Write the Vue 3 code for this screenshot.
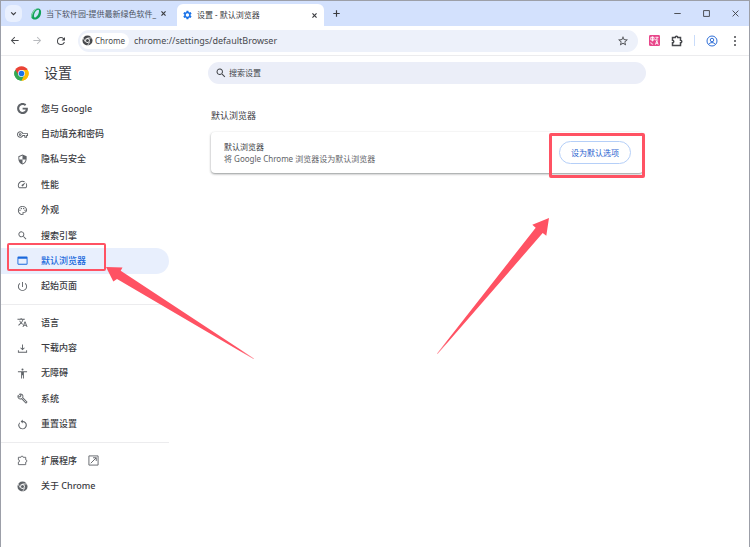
<template>
  <div class="window">
    <header class="tabstrip">
      <button class="tab-search" type="button" aria-label="搜索标签页">
        <svg viewBox="0 0 24 24" class="icon-sm"><path class="line bold" d="M4 8l8 8 8-8" /></svg>
      </button>
      <div class="tab">
        <svg class="icon-lg" viewBox="0 0 24 24">
          <path fill="#12a25a" fill-rule="evenodd" d="M15 1c6 0 8 4 7 10-1 7-6 12-12 12-7 0-9-5-7-11C5 6 9 1 15 1zm0 3c-4 1-7 7-7 12 0 3 2 4 4 2 4-3 6-8 6-12 0-2-1-3-3-2z" />
          <path fill="#8ed8b1" d="M15 1C9 1 5 6 3 12c-1 3-1 6 1 8 0-8 4-15 11-19z" />
        </svg>
        <span class="tab-title muted">当下软件园-提供最新绿色软件_</span>
        <button class="close" type="button" aria-label="关闭">
          <svg viewBox="0 0 24 24" class="icon-sm"><path class="line bold" d="M5 5l14 14M19 5L5 19" /></svg>
        </button>
      </div>
      <div class="tab active">
        <svg class="icon-lg" viewBox="0 0 24 24"><path fill="#1a73e8" fill-rule="evenodd" :d="paths.gear" /></svg>
        <span class="tab-title">设置 - 默认浏览器</span>
        <button class="close" type="button" aria-label="关闭">
          <svg viewBox="0 0 24 24" class="icon-sm"><path class="line bold" d="M5 5l14 14M19 5L5 19" /></svg>
        </button>
      </div>
      <button class="new-tab" type="button" aria-label="新标签页">
        <svg viewBox="0 0 24 24" class="icon-sm"><path class="line bold" d="M12 1v22M1 12h22" /></svg>
      </button>
      <div class="controls">
        <button type="button" aria-label="最小化"><svg viewBox="0 0 24 24" class="icon-sm"><path class="line strong" d="M1 12h22" /></svg></button>
        <button type="button" aria-label="最大化"><svg viewBox="0 0 24 24" class="icon-sm"><path class="line strong" d="M2 2h20v20H2z" /></svg></button>
        <button type="button" aria-label="关闭窗口"><svg viewBox="0 0 24 24" class="icon-sm"><path class="line strong" d="M2 2l20 20M22 2L2 22" /></svg></button>
      </div>
    </header>

    <div class="toolbar">
      <div class="nav-buttons">
        <button type="button" aria-label="后退"><svg viewBox="0 0 24 24" class="icon-md"><path :d="paths.back" /></svg></button>
        <button type="button" aria-label="前进" disabled><svg viewBox="0 0 24 24" class="icon-md"><path :d="paths.forward" /></svg></button>
        <button type="button" aria-label="重新加载"><svg viewBox="0 0 24 24" class="icon-lg"><path :d="paths.reload" /></svg></button>
      </div>
      <div class="address">
        <span class="chip">
          <svg viewBox="0 0 24 24" class="icon-md"><path fill-rule="evenodd" :d="paths.chrome" /><path class="gap" :d="paths.chromeGaps" /></svg>
          Chrome
        </span>
        <input v-model="url" class="url" type="text" aria-label="网址" />
        <button type="button" aria-label="添加书签"><svg viewBox="0 0 24 24" class="icon-lg"><path :d="paths.star" /></svg></button>
      </div>
      <div class="actions">
        <button type="button" aria-label="翻译扩展">
          <svg viewBox="0 0 24 24" class="icon-md">
            <rect width="24" height="24" rx="3" fill="#e8468a" />
            <path class="white" d="M4 5h7v6H4zM7.500 3v11M14 5h6l-6 6h6M14 21l3-8 3 8M15 18h4M4 16c0 3 2 4 5 4" />
          </svg>
        </button>
        <button type="button" aria-label="扩展程序"><svg viewBox="0 0 24 24" class="icon-lg"><path class="line strong" :d="paths.puzzle" /></svg></button>
        <span class="separator"></span>
        <button type="button" aria-label="个人资料">
          <svg viewBox="0 0 24 24" class="icon-lg"><g class="blue"><circle cx="12" cy="12" r="10" /><circle cx="12" cy="10" r="3.500" /><path d="M5 19c3-5 11-5 14 0" /></g></svg>
        </button>
        <button type="button" aria-label="更多"><svg viewBox="0 0 24 24" class="icon-lg"><circle cx="12" cy="4" r="2" /><circle cx="12" cy="12" r="2" /><circle cx="12" cy="20" r="2" /></svg></button>
      </div>
    </div>

    <div class="page">
      <aside class="sidebar">
        <div class="brand">
          <svg class="logo" viewBox="0 0 48 48">
            <path fill="#ea4335" d="M24 24L4.080 12.500a23 23 0 0 1 39.840 0z" />
            <path fill="#fbbc04" d="M24 24l19.920-11.500A23 23 0 0 1 24 47z" />
            <path fill="#34a853" d="M24 24v23A23 23 0 0 1 4.080 12.500z" />
            <path fill="#ea4335" d="M4.080 12.500L14.500 30 24 13h19.900z" />
            <path fill="#34a853" d="M4.080 12.500L14.500 29.500l19 0L24 47A23 23 0 0 1 4.080 12.500z" />
            <path fill="#fbbc04" d="M24 13h19.900A23 23 0 0 1 24 47l10-17.500z" />
            <circle cx="24" cy="24" r="11" fill="#fff" />
            <circle cx="24" cy="24" r="9" fill="#1a73e8" />
          </svg>
          <h1>设置</h1>
        </div>
        <nav>
          <ul v-for="(group, i) in groups" :key="i" :class="['group', 'group-' + group.length]">
            <li v-for="item in group" :key="item.label">
              <a href="#" :class="{ selected: item.label === current }" @click.prevent="current = item.label">
                <svg viewBox="0 0 24 24" class="icon-md">
                  <path :class="{ line: item.stroke }" fill-rule="evenodd" :d="paths[item.icon]" />
                  <path v-if="item.icon === 'chrome'" class="gap" :d="paths.chromeGaps" />
                </svg>
                <span>{{ item.label }}</span>
                <svg v-if="item.external" viewBox="0 0 24 24" class="icon-md"><path class="line" :d="paths.external" /></svg>
              </a>
              <template v-if="item.marked">
                <span class="mark nav-mark"></span>
                <svg class="arrow nav-arrow" viewBox="0 0 148 92">
                  <defs>
                    <linearGradient id="fadeA" x1="0" y1="0" x2="1" y2="0">
                      <stop offset="0.900" stop-color="#ff5263" />
                      <stop offset="1" stop-color="#ff5263" stop-opacity="0.600" />
                    </linearGradient>
                  </defs>
                  <path fill="url(#fadeA)" d="M0 0l16.500.5-1.800 3.300L148 91.500l-.6.5L11 12 7.300 14.500z" />
                </svg>
              </template>
            </li>
          </ul>
        </nav>
      </aside>

      <main>
        <label class="search">
          <svg viewBox="0 0 24 24" class="icon-lg"><path :d="paths.search" /></svg>
          <input v-model="query" type="text" placeholder="搜索设置" aria-label="搜索设置" />
        </label>
        <section>
          <h2>默认浏览器</h2>
          <div class="card">
            <div class="card-text">
              <strong>默认浏览器</strong>
              <span>将 Google Chrome 浏览器设为默认浏览器</span>
            </div>
            <div class="card-action">
              <button type="button">设为默认选项</button>
              <span class="mark button-mark"></span>
              <svg class="arrow button-arrow" viewBox="0 0 112 136">
                <defs>
                  <linearGradient id="fadeB" x1="0" y1="1" x2="0" y2="0">
                    <stop offset="0" stop-color="#ff5263" stop-opacity="0.600" />
                    <stop offset="0.100" stop-color="#ff5263" />
                  </linearGradient>
                </defs>
                <path fill="url(#fadeB)" d="M112 0L95.300 6.700l3.400 3L0 135.500l.6.5L105.700 15l3.600 2.700z" />
              </svg>
            </div>
          </div>
        </section>
      </main>
    </div>
  </div>
</template>

<script setup>
import { ref } from 'vue';

const url = ref('chrome://settings/defaultBrowser');
const query = ref('');
const current = ref('默认浏览器');

const groups = [
  [
    { label: '您与 Google', icon: 'google' },
    { label: '自动填充和密码', icon: 'key' },
    { label: '隐私与安全', icon: 'shield' },
    { label: '性能', icon: 'speed' },
    { label: '外观', icon: 'palette' },
    { label: '搜索引擎', icon: 'search' },
    { label: '默认浏览器', icon: 'browser', marked: true },
    { label: '起始页面', icon: 'power' }
  ],
  [
    { label: '语言', icon: 'translate' },
    { label: '下载内容', icon: 'download' },
    { label: '无障碍', icon: 'person' },
    { label: '系统', icon: 'wrench' },
    { label: '重置设置', icon: 'reset' }
  ],
  [
    { label: '扩展程序', icon: 'puzzle', stroke: true, external: true },
    { label: '关于 Chrome', icon: 'chrome' }
  ]
];

const paths = {
  back: 'M21 11H7.830l5.590-5.590L12 4l-8 8 8 8 1.410-1.410L7.830 13H21z',
  forward: 'M12 4l-1.410 1.410L16.170 11H3v2h13.170l-5.580 5.590L12 20l8-8z',
  reload: 'M17.650 6.350A7.960 7.960 0 0 0 12 4a8 8 0 1 0 7.730 10h-2.080A6 6 0 1 1 12 6c1.660 0 3.140.69 4.220 1.780L13 11h7V4z',
  star: 'M22 9.240l-7.190-.62L12 2 9.190 8.630 2 9.240l5.460 4.730L5.820 21 12 17.270 18.180 21l-1.630-7.030L22 9.240zM12 15.400l-3.760 2.270 1-4.280-3.320-2.880 4.380-.38L12 6.100l1.710 4.040 4.380.38-3.320 2.880 1 4.280z',
  gear: 'M19.140 12.940a7 7 0 0 0 0-1.880l2.030-1.580-1.920-3.320-2.390.96a7 7 0 0 0-1.620-.94L14.800 3.600h-3.840l-.4 2.580c-.59.24-1.130.57-1.620.94l-2.390-.96-1.920 3.320 2.030 1.580a7 7 0 0 0 0 1.880l-2.030 1.580 1.920 3.320 2.390-.96c.5.38 1.030.7 1.620.94l.4 2.580h3.840l.4-2.580c.59-.24 1.130-.56 1.620-.94l2.390.96 1.920-3.320zM12.900 15.400a3.400 3.400 0 1 1 0-6.800 3.400 3.400 0 0 1 0 6.800z',
  google: 'M12.240 10.285V14.400h6.806c-.275 1.765-2.056 5.174-6.806 5.174-4.095 0-7.439-3.389-7.439-7.574s3.345-7.574 7.439-7.574c2.330 0 3.891.989 4.785 1.849l3.254-3.138C18.189 1.186 15.479 0 12.240 0c-6.635 0-12 5.365-12 12s5.365 12 12 12c6.926 0 11.520-4.869 11.520-11.726 0-.788-.085-1.390-.189-1.989H12.240z',
  key: 'M22 19h-6v-4h-2.680c-1.140 2.420-3.600 4-6.320 4-3.860 0-7-3.140-7-7s3.140-7 7-7c2.720 0 5.170 1.580 6.320 4H24v6h-2v4zm-4-2h2v-4h2v-2H11.940l-.23-.67C11.010 8.340 9.110 7 7 7c-2.760 0-5 2.240-5 5s2.240 5 5 5c2.110 0 4.010-1.340 4.710-3.330l.23-.67H18v4zM7 15c-1.650 0-3-1.350-3-3s1.350-3 3-3 3 1.350 3 3-1.350 3-3 3zm0-4c-.55 0-1 .45-1 1s.45 1 1 1 1-.45 1-1-.45-1-1-1z',
  shield: 'M12 1L3 5v6c0 5.550 3.840 10.740 9 12 5.160-1.260 9-6.450 9-12V5l-9-4zm0 10.990h7c-.53 4.120-3.280 7.790-7 8.940V12H5V6.300l7-3.110v8.800z',
  speed: 'M20.380 8.570l-1.230 1.850a8 8 0 0 1-.22 7.580H5.070A8 8 0 0 1 15.580 6.850l1.850-1.230A10 10 0 0 0 3.350 19a2 2 0 0 0 1.720 1h13.850a2 2 0 0 0 1.740-1 10 10 0 0 0-.27-10.440zm-9.790 6.840a2 2 0 0 0 2.830 0l5.660-8.490-8.490 5.660a2 2 0 0 0 0 2.830z',
  palette: 'M12 22C6.490 22 2 17.510 2 12S6.490 2 12 2s10 4.040 10 9c0 3.310-2.690 6-6 6h-1.770c-.28 0-.5.22-.5.5 0 .12.05.23.13.33.41.47.64 1.060.64 1.670A2.500 2.500 0 0 1 12 22zm0-18c-4.410 0-8 3.590-8 8s3.590 8 8 8c.28 0 .5-.22.5-.5a.54.54 0 0 0-.14-.35c-.41-.46-.63-1.050-.63-1.650a2.500 2.500 0 0 1 2.500-2.500H16c2.210 0 4-1.790 4-4 0-3.860-3.590-7-8-7zM5 11.500a1.500 1.500 0 1 0 3 0 1.500 1.500 0 1 0-3 0zM8 7.500a1.500 1.500 0 1 0 3 0 1.500 1.500 0 1 0-3 0zM13 7.500a1.500 1.500 0 1 0 3 0 1.500 1.500 0 1 0-3 0zM16 11.500a1.500 1.500 0 1 0 3 0 1.500 1.500 0 1 0-3 0z',
  search: 'M15.500 14h-.79l-.28-.27A6.500 6.500 0 1 0 13.730 14.430l.27.28v.79l5 4.990L20.490 19l-4.990-5zm-6 0a4.500 4.500 0 1 1 0-9 4.500 4.500 0 0 1 0 9z',
  browser: 'M21 3H3c-1.110 0-2 .9-2 2v14c0 1.100.89 2 2 2h18c1.100 0 2-.9 2-2V5c0-1.100-.89-2-2-2zm0 16H3V8h18v11z',
  power: 'M13 2h-2v11h2V2zm5.500 2.300l-1.400 1.500A8 8 0 1 1 4 12a8 8 0 0 1 2.900-6.200L5.500 4.300A10 10 0 1 0 18.500 4.300z',
  translate: 'M12.870 15.070l-2.540-2.510.03-.03c1.740-1.940 2.980-4.170 3.710-6.530H17V4h-7V2H8v2H1v1.990h11.170C11.500 7.920 10.440 9.750 9 11.350 8.070 10.320 7.300 9.190 6.690 8h-2c.73 1.630 1.730 3.170 2.980 4.560l-5.090 5.020L4 19l5-5 3.110 3.110.76-2.040zM18.500 10h-2L12 22h2l1.120-3h4.750L21 22h2l-4.500-12zm-2.620 7l1.620-4.330L19.120 17h-3.240z',
  download: 'M12 16l-5-5 1.400-1.450 2.600 2.600V3h2v9.150l2.600-2.600L17 11l-5 5zM2 21v-5h2v3h16v-3h2v5z',
  person: 'M12 1a2.200 2.200 0 1 1 0 4.400A2.200 2.200 0 0 1 12 1zm10 8h-7v14h-2v-7h-2v7H9V9H2V7h20v2z',
  wrench: 'M22.610 18.990l-9.080-9.080c.93-2.340.45-5.100-1.440-7C9.790.61 6.210.4 3.660 2.260L7.500 6.110 6.080 7.520 2.250 3.690C.39 6.230.6 9.820 2.900 12.110c1.860 1.860 4.570 2.350 6.890 1.480l9.110 9.110c.39.39 1.020.39 1.410 0l2.300-2.300c.4-.38.4-1.010 0-1.410zm-3 1.600l-9.460-9.460c-.61.45-1.290.72-2 .82-1.360.2-2.790-.21-3.830-1.250C3.370 9.760 2.930 8.500 3 7.260l3.090 3.090 4.240-4.240-3.090-3.090c1.240-.07 2.490.37 3.440 1.310 1.080 1.080 1.490 2.570 1.240 3.960-.12.71-.42 1.370-.88 1.960l9.450 9.450-.88.89z',
  reset: 'M12.500 1v3.500a9 9 0 0 1 0 18H12A9 9 0 0 1 5.200 7.500l1.500 1.400A7 7 0 1 0 12.500 6.500V10L8 5.500z',
  puzzle: 'M3 5h5.500a2.500 2.500 0 0 1 5 0H19v5.500a2.500 2.500 0 0 1 0 5V21H3v-5.500a2.500 2.500 0 0 0 0-5z',
  external: 'M2 2h20v20H2zM6 18L18 6M11 6h7v7',
  chrome: 'M12 1a11 11 0 1 0 0 22 11 11 0 0 0 0-22zm0 5.800a5.200 5.200 0 1 1 0 10.400 5.200 5.200 0 0 1 0-10.400zm0 1.900a3.300 3.300 0 1 0 0 6.600 3.300 3.300 0 0 0 0-6.600z',
  chromeGaps: 'M12 6.400h10M7.100 14.800L2.100 6.100M16.900 14.800l-5 8.700'
};
</script>

<style>
body {
  background: #fff;
}
</style>

<style scoped>
.window {
  box-sizing: border-box;
  min-height: 100vh;
  border: 1px solid #9c9fa8;
  border-bottom: none;
  background: #fff;
  color: #3a3b3f;
  font-family: "Noto Sans", "Noto Sans CJK SC", sans-serif;
  font-size: 9px;
  line-height: 12px;
}

button {
  display: flex;
  align-items: center;
  justify-content: center;
  padding: 0;
  border: none;
  background: transparent;
  color: inherit;
  font: inherit;
  cursor: pointer;
}

input {
  min-width: 0;
  padding: 0;
  border: none;
  outline: none;
  background: transparent;
  color: inherit;
  font: inherit;
}

svg {
  display: block;
  flex: none;
  fill: currentColor;
}

.icon-sm { width: 7px; height: 7px; }
.icon-md { width: 11px; height: 11px; }
.icon-lg { width: 12px; height: 12px; }

.line { fill: none; stroke: currentColor; stroke-width: 2; }
.line.strong { stroke-width: 3; }
.line.bold { stroke-width: 4; }
.gap { fill: none; stroke: #fff; stroke-width: 1.5; }
.white { fill: none; stroke: #fff; stroke-width: 2; }
.blue { fill: none; stroke: #2f6fd8; stroke-width: 2; }

/* Tabs */
.tabstrip {
  display: flex;
  align-items: center;
  height: 25px;
  background: #d3e1fd;
  font-size: 8px;
}

.tab-search {
  width: 17px;
  height: 17px;
  margin-left: 4px;
  border-radius: 6px;
  background: #e9f0fe;
}

.tab {
  box-sizing: border-box;
  display: flex;
  flex: none;
  align-items: center;
  width: 147px;
  height: 22px;
  padding-left: 8px;
}

.tab.active {
  align-self: flex-end;
  margin-left: 8px;
  padding: 0 4px;
  border-radius: 6px 6px 0 0;
  background: #fff;
}

.tab-title {
  flex: 1;
  margin-left: 4px;
  white-space: nowrap;
}

.muted {
  color: #4b5160;
}

.close {
  width: 12px;
  height: 12px;
}

.new-tab {
  width: 24px;
  height: 24px;
}

.controls {
  display: flex;
  gap: 5px;
  margin-left: auto;
  padding-right: 2px;
}

.controls button {
  width: 24px;
  height: 24px;
}

/* Toolbar */
.toolbar {
  display: flex;
  align-items: center;
  height: 29px;
  border-bottom: 1px solid #ececee;
  color: #47494d;
}

.nav-buttons {
  display: flex;
  gap: 12px;
  padding: 0 11px 0 8px;
}

.nav-buttons button:disabled {
  color: #b9bbbf;
}

.address {
  box-sizing: border-box;
  display: flex;
  flex: 1;
  align-items: center;
  height: 22px;
  padding: 0 9px 0 2px;
  border-radius: 11px;
  background: #edf1fa;
}

.chip {
  display: flex;
  align-items: center;
  gap: 2px;
  height: 16px;
  padding: 0 4px 0 2px;
  border-radius: 8px;
  background: #fff;
  font-size: 8px;
}

.url {
  flex: 1;
  margin-left: 5px;
}

.actions {
  display: flex;
  align-items: center;
  gap: 11px;
  padding: 0 8px 0 11px;
}

.separator {
  width: 1px;
  height: 11px;
  background: #c9dcfa;
}

/* Settings page */
.page {
  display: flex;
}

.sidebar {
  flex: none;
  width: 207px;
}

.brand {
  display: flex;
  align-items: center;
  gap: 15px;
  height: 34px;
  padding-left: 13px;
}

.logo {
  width: 15px;
  height: 15px;
}

h1 {
  margin: 0;
  font-size: 14px;
  font-weight: 400;
  line-height: 20px;
}

nav {
  width: 168px;
  padding-top: 6px;
}

.group {
  display: grid;
  grid-auto-rows: 1fr;
  margin: 0;
  padding: 0;
  list-style: none;
}

.group + .group {
  margin-top: 5px;
  padding-top: 5px;
  border-top: 1px solid #ececee;
}

.group-8 { height: 203px; }
.group-5 { height: 127px; }
.group-2 { height: 51px; }

.group li {
  position: relative;
}

.group a {
  display: flex;
  align-items: center;
  height: 100%;
  padding-left: 16px;
  border-radius: 0 13px 13px 0;
  color: #5f6368;
  font-weight: 500;
  text-decoration: none;
}

.group a span {
  margin: 0 11px 0 13px;
  color: #3a3b3f;
}

.group a.selected,
.group a.selected span {
  background: #e8effd;
  color: #1a68dc;
}

main {
  flex: 1;
  min-width: 0;
  padding: 6px 103px 0 0;
}

.search {
  display: flex;
  align-items: center;
  gap: 2px;
  height: 22px;
  padding: 0 7px;
  border-radius: 11px;
  background: #ebeef8;
  color: #44474c;
  font-size: 8px;
}

.search input {
  flex: 1;
}

.search input::placeholder {
  color: #44474c;
  opacity: 1;
}

section {
  padding: 26px 3px 0;
}

h2 {
  margin: 0 0 10px;
  font-size: 9px;
  font-weight: 400;
  line-height: 12px;
}

.card {
  display: flex;
  align-items: center;
  justify-content: space-between;
  height: 41px;
  padding: 0 12px 0 13px;
  border-radius: 4px;
  background: #fff;
  box-shadow: 0 1px 2px rgba(60, 64, 67, 0.4), 0 1px 3px rgba(60, 64, 67, 0.2);
  font-size: 8px;
}

.card-text {
  display: flex;
  flex-direction: column;
}

.card-text strong {
  font-weight: 400;
}

.card-text span {
  color: #5f6368;
}

.card-action {
  position: relative;
}

.card-action button {
  width: 72px;
  height: 23px;
  border: 1px solid #b5cff8;
  border-radius: 12px;
  color: #1f62cf;
}

/* Callouts drawn over the page */
.mark {
  position: absolute;
  z-index: 1;
  box-sizing: border-box;
  border: 2px solid #ff5263;
  border-radius: 2px;
  pointer-events: none;
}

.nav-mark {
  top: -5px;
  left: 6px;
  width: 99px;
  height: 28px;
}

.button-mark {
  inset: -8px -14px -14px -10px;
  border-width: 3px;
}

.arrow {
  position: absolute;
  z-index: 1;
  pointer-events: none;
}

.nav-arrow {
  top: 19px;
  left: 105px;
  width: 148px;
  height: 92px;
}

.button-arrow {
  top: 77px;
  right: 82px;
  width: 112px;
  height: 136px;
}
</style>
